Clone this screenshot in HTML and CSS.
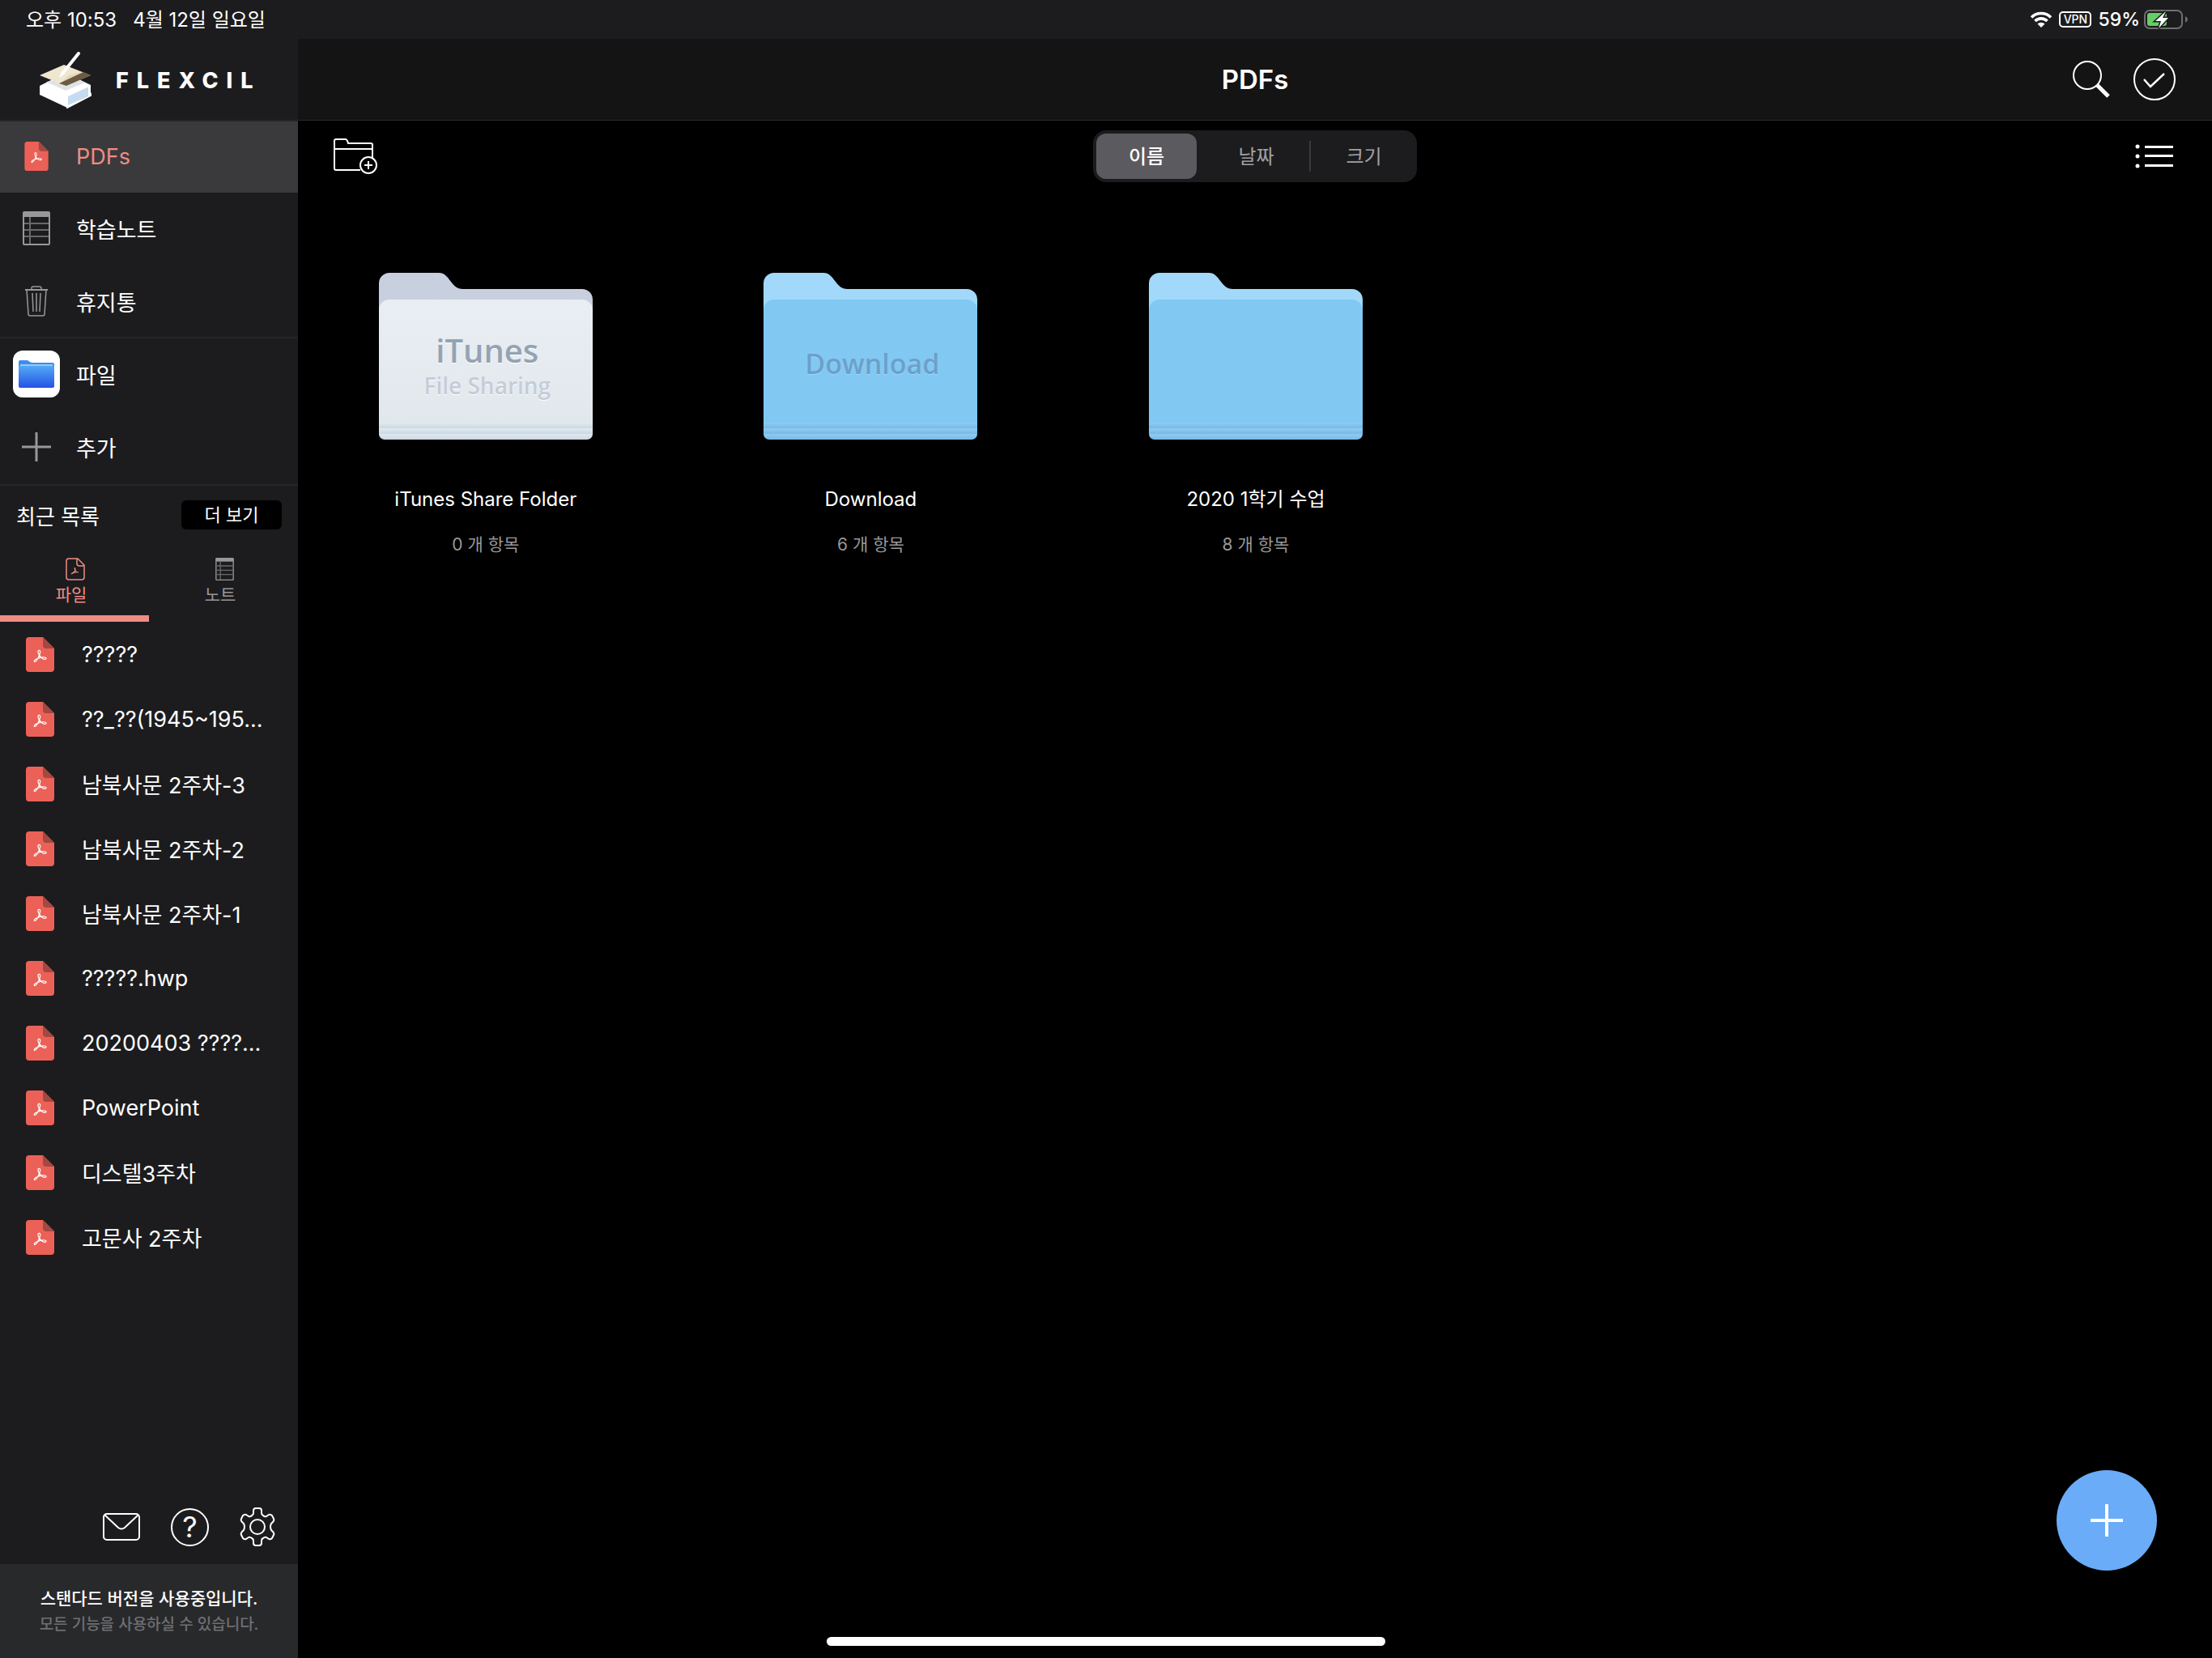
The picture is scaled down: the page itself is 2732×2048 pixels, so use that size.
FILE: index.html
```html
<!DOCTYPE html>
<html lang="ko">
<head>
    <meta charset="UTF-8">
    <meta name="viewport" content="width=device-width, initial-scale=1.0">
    <title>Flexcil - PDFs</title>
    <link rel="stylesheet" href="styles.css">
</head>
<body>
    <!-- Shared shapes -->
    <svg class="defs" width="0" height="0" aria-hidden="true">
        <symbol id="pdf" viewBox="0 0 35 43">
            <path d="M4 0H21L35 14V39a4 4 0 0 1-4 4H4a4 4 0 0 1-4-4V4a4 4 0 0 1 4-4z" fill="#ec6157"/>
            <path d="M21 0L35 14H25a4 4 0 0 1-4-4z" fill="#a34842"/>
            <path d="M16.800 25C17 22 14.500 20 15 17.500C15.500 15.500 18 16 17.700 18.500C17.500 21 15.500 25 13.500 28.500C12 31 9.500 31 10.500 29C12 26.500 17 25.500 21 24.800C24 24.500 26 26 24.500 27C22.500 28 18.500 26 17 22.500" fill="none" stroke="#fff" stroke-width="1.200" stroke-linejoin="round"/>
        </symbol>
        <symbol id="note" viewBox="0 0 34 42">
            <rect x="1" y="1" width="32" height="40" rx="1" fill="none" stroke="#98989a" stroke-width="2"/>
            <path d="M1 1h32v6H1z" fill="#98989a"/>
            <path d="M2 15h30M2 23h30M2 31h30M9 7v33" stroke="#68686a" stroke-width="2"/>
        </symbol>
        <linearGradient id="stripe" x1="0" y1="0" x2="0" y2="1">
            <stop offset="0" stop-color="#8fccf4"/>
            <stop offset="1" stop-color="#78b8e4"/>
        </linearGradient>
        <linearGradient id="paper" x1="0" y1="0" x2="0" y2="1">
            <stop offset="0" stop-color="#e9eef3"/>
            <stop offset="1" stop-color="#e1e8ec"/>
        </linearGradient>
        <linearGradient id="paperStripe" x1="0" y1="0" x2="0" y2="1">
            <stop offset="0" stop-color="#e1eaf0"/>
            <stop offset="1" stop-color="#cbd7e2"/>
        </linearGradient>
        <linearGradient id="fileBlue" x1="0" y1="0" x2="0" y2="1">
            <stop offset="0" stop-color="#52aaf5"/>
            <stop offset="1" stop-color="#2451e6"/>
        </linearGradient>
        <symbol id="folder" viewBox="0 0 264 206">
            <path d="M0 13A13 13 0 0 1 13 0H74C88 0 88 20 104 20H251a13 13 0 0 1 13 13V100H0z" fill="#a2d9fa"/>
            <path d="M0 46a13 13 0 0 1 13-13H251a13 13 0 0 1 13 13V190H0z" fill="#81c8f3"/>
            <path d="M0 185h264v7H0zM0 192h264v7H0z" fill="#8fccf4"/>
            <path d="M0 199h264a7 7 0 0 1-7 7H7a7 7 0 0 1-7-7z" fill="url(#stripe)"/>
            <rect y="185" width="264" height="7" fill="url(#stripe)"/>
            <rect y="192" width="264" height="7" fill="url(#stripe)"/>
        </symbol>
        <symbol id="folder-light" viewBox="0 0 264 206">
            <path d="M0 13A13 13 0 0 1 13 0H74C88 0 88 20 104 20H251a13 13 0 0 1 13 13V100H0z" fill="#c8cfde"/>
            <path d="M0 46a13 13 0 0 1 13-13H251a13 13 0 0 1 13 13V190H0z" fill="url(#paper)"/>
            <path d="M0 199h264a7 7 0 0 1-7 7H7a7 7 0 0 1-7-7z" fill="url(#paperStripe)"/>
            <rect y="185" width="264" height="7" fill="url(#paperStripe)"/>
            <rect y="192" width="264" height="7" fill="url(#paperStripe)"/>
        </symbol>
    </svg>

    <!-- Status Bar -->
    <div class="status-bar">
        <div class="status-left">
            <span>오후 10:53</span>
            <span>4월 12일 일요일</span>
        </div>
        <div class="status-right">
            <svg width="28" height="20" viewBox="0 0 28 20">
                <path d="M2 7.500a17 17 0 0 1 24 0M6.500 12a10.500 10.500 0 0 1 15 0" fill="none" stroke="#fff" stroke-width="3.600"/>
                <path d="M9.500 15.500a6.500 6.500 0 0 1 9 0L14 20z" fill="#fff"/>
            </svg>
            <span class="vpn">VPN</span>
            <span class="percent">59%</span>
            <svg width="54" height="24" viewBox="0 0 54 24">
                <rect x="1" y="1" width="46" height="22" rx="6" fill="none" stroke="#6f6f72" stroke-width="2"/>
                <path d="M51 8q3 1.500 3 4t-3 4z" fill="#6f6f72"/>
                <rect x="4" y="4" width="24" height="16" rx="3" fill="#65ce66"/>
                <path d="M27 2L14 14h7l-3 9L30 10h-7z" fill="#fff" stroke="#1c1c1e" stroke-width="3" paint-order="stroke"/>
            </svg>
        </div>
    </div>

    <div class="app">
        <!-- Sidebar -->
        <aside class="sidebar">
            <div class="brand">
                <svg width="64" height="70" viewBox="0 0 64 70">
                    <path d="M0 42L32 26 63 41v11L34 69 0 53z" fill="#fff"/>
                    <path d="M8 37L32 48 56 38 40 32z" fill="#e0e2e3"/>
                    <path d="M35 55L61 43v11L35 66z" fill="#c4dcf2"/>
                    <path d="M61 43v10l2-1v2L34 69v-3" fill="none" stroke="#fff" stroke-width="2"/>
                    <path d="M0 29L30 16 63 29 32 42z" fill="#efe6cf"/>
                    <path d="M36 29L52 25 56 27 24 40z" fill="#e5d7b5"/>
                    <path d="M54 25L63 29 33 42 24 39z" fill="#6b5b45"/>
                    <path d="M48 2L28 27" stroke="#fff" stroke-width="4" stroke-linecap="round"/>
                    <path d="M27 24l4 3-7 5z" fill="#fff"/>
                </svg>
                <span class="brand-name">FLEXCIL</span>
            </div>

            <nav class="menu">
                <a href="#" class="active"><span class="icon"><svg width="30" height="36"><use href="#pdf"/></svg></span>PDFs</a>
                <a href="#"><span class="icon"><svg width="34" height="42"><use href="#note"/></svg></span>학습노트</a>
                <a href="#" class="divided"><span class="icon">
                    <svg width="28" height="38" viewBox="0 0 28 38" fill="none" stroke="#98989a">
                        <path d="M0 5h28" stroke-width="2"/>
                        <path d="M8 5V3q0-2 2-2h8q2 0 2 2v2M2 5l2 30q0 2 2 2h16q2 0 2-2l2-30M9 9l1 23M14 9v23M19 9l-1 23" stroke-width="1.500"/>
                    </svg></span>휴지통</a>
                <a href="#"><span class="icon">
                    <svg width="58" height="58" viewBox="0 0 58 58">
                        <rect width="58" height="58" rx="12" fill="#fff"/>
                        <path d="M7 14q0-2 2-2h8q2 0 4 2 1 1 3 1h25q2 0 2 2v8H7z" fill="#3a8ff0"/>
                        <path d="M9 18h40" stroke="#fff"/>
                        <path d="M7 19h44v25q0 2-2 2H9q-2 0-2-2z" fill="url(#fileBlue)"/>
                    </svg></span>파일</a>
                <a href="#"><span class="icon">
                    <svg width="36" height="36" viewBox="0 0 36 36"><path d="M18 0v36M0 18h36" stroke="#98989a" stroke-width="3"/></svg></span>추가</a>
            </nav>

            <div class="recent-head">
                <h2>최근 목록</h2>
                <button class="more">더 보기</button>
            </div>
            <div class="tabs">
                <button class="tab selected">
                    <svg width="24" height="28" viewBox="0 0 24 28" fill="none" stroke="#f08c84">
                        <path d="M4 1H15l8 8V24q0 3-3 3H4q-3 0-3-3V4q0-3 3-3zM14 1v6q0 3 3 3h6" stroke-width="1.500"/>
                        <path d="M11 12q2 3 0 5l-4 3q5-3 9-2-4 0-5-5" stroke-width="1.200"/>
                    </svg>
                    파일
                </button>
                <button class="tab">
                    <svg width="23" height="28"><use href="#note"/></svg>
                    노트
                </button>
            </div>
            <ul class="recent">
                <li><a href="#"><svg width="35" height="43"><use href="#pdf"/></svg>?????</a></li>
                <li><a href="#"><svg width="35" height="43"><use href="#pdf"/></svg>??_??(1945~195...</a></li>
                <li><a href="#"><svg width="35" height="43"><use href="#pdf"/></svg>남북사문 2주차-3</a></li>
                <li><a href="#"><svg width="35" height="43"><use href="#pdf"/></svg>남북사문 2주차-2</a></li>
                <li><a href="#"><svg width="35" height="43"><use href="#pdf"/></svg>남북사문 2주차-1</a></li>
                <li><a href="#"><svg width="35" height="43"><use href="#pdf"/></svg>?????.hwp</a></li>
                <li><a href="#"><svg width="35" height="43"><use href="#pdf"/></svg>20200403 ????...</a></li>
                <li><a href="#"><svg width="35" height="43"><use href="#pdf"/></svg>PowerPoint</a></li>
                <li><a href="#"><svg width="35" height="43"><use href="#pdf"/></svg>디스텔3주차</a></li>
                <li><a href="#"><svg width="35" height="43"><use href="#pdf"/></svg>고문사 2주차</a></li>
            </ul>

            <div class="tools">
                <button aria-label="메일">
                    <svg width="46" height="34" viewBox="0 0 46 34" fill="none" stroke="#fff" stroke-width="2">
                        <rect x="1" y="1" width="44" height="32" rx="4"/>
                        <path d="M2 2l17 16q4 3 8 0L44 2"/>
                    </svg>
                </button>
                <button aria-label="도움말" class="help">?</button>
                <button aria-label="설정">
                    <svg width="44" height="48" viewBox="0 0 44 48" fill="none" stroke="#fff" stroke-width="2" stroke-linejoin="round">
                        <path d="M17 4q0-3 3-3h4q3 0 3 3v3q0 2 2 3 2 2 4 1l3-2q2-1 4 1l2 4q1 2-1 4l-2 2q-1 2-1 4t1 4l2 2q2 2 1 4l-2 4q-2 2-4 1l-3-2q-2-1-4 1-2 1-2 3v3q0 3-3 3h-4q-3 0-3-3v-3q0-2-2-3-2-2-4-1l-3 2q-2 1-4-1l-2-4q-1-2 1-4l2-2q1-2 1-4t-1-4l-2-2q-2-2-1-4l2-4q2-2 4-1l3 2q2 1 4-1 2-1 2-3z"/>
                        <circle cx="22" cy="24" r="9"/>
                    </svg>
                </button>
            </div>
            <div class="plan">
                <p>스탠다드 버전을 사용중입니다.</p>
                <small>모든 기능을 사용하실 수 있습니다.</small>
            </div>
        </aside>

        <!-- Documents -->
        <main>
            <header>
                <h1>PDFs</h1>
                <div class="header-buttons">
                    <button aria-label="검색">
                        <svg width="46" height="46" viewBox="0 0 46 46" fill="none" stroke="#fff">
                            <circle cx="18" cy="18" r="17" stroke-width="2"/>
                            <path d="M30 30l14 14" stroke-width="5"/>
                        </svg>
                    </button>
                    <button aria-label="선택">
                        <svg width="54" height="54" viewBox="0 0 54 54" fill="none" stroke="#fff" stroke-width="2">
                            <circle cx="27" cy="27" r="25"/>
                            <path d="M14 27l8 9 17-16" stroke-width="2.500"/>
                        </svg>
                    </button>
                </div>
            </header>

            <div class="toolbar">
                <button aria-label="새 폴더">
                    <svg width="54" height="44" viewBox="0 0 54 44" fill="none" stroke="#fff" stroke-width="2">
                        <path d="M33 39H3q-2 0-2-2V3q0-2 2-2h12q1 0 2 2l1 3h28q2 0 2 2v16M1 13h47"/>
                        <circle cx="43" cy="33" r="10"/>
                        <path d="M43 28v10M38 33h10"/>
                    </svg>
                </button>
                <div class="sort">
                    <button class="selected">이름</button>
                    <button>날짜</button>
                    <button>크기</button>
                </div>
                <button aria-label="목록 보기" class="list-view">
                    <svg width="47" height="30" viewBox="0 0 47 30" fill="#fff">
                        <circle cx="3" cy="3" r="2.500"/><circle cx="3" cy="15" r="2.500"/><circle cx="3" cy="27" r="2.500"/>
                        <path d="M12 2h35v3H12zM12 13h35v3H12zM12 25h35v3H12z"/>
                    </svg>
                </button>
            </div>

            <div class="folders">
                <a href="#" class="folder">
                    <span class="art">
                        <svg width="264" height="206"><use href="#folder-light"/></svg>
                        <span class="emboss itunes">iTunes<small>File Sharing</small></span>
                    </span>
                    <span class="name">iTunes Share Folder</span>
                    <span class="count">0 개 항목</span>
                </a>
                <a href="#" class="folder">
                    <span class="art">
                        <svg width="264" height="206"><use href="#folder"/></svg>
                        <span class="emboss">Download</span>
                    </span>
                    <span class="name">Download</span>
                    <span class="count">6 개 항목</span>
                </a>
                <a href="#" class="folder">
                    <span class="art">
                        <svg width="264" height="206"><use href="#folder"/></svg>
                    </span>
                    <span class="name">2020 1학기 수업</span>
                    <span class="count">8 개 항목</span>
                </a>
            </div>
        </main>
    </div>

    <button class="add" aria-label="추가">
        <svg width="40" height="40" viewBox="0 0 40 40"><path d="M20 0v40M0 20h40" stroke="#fff" stroke-width="4"/></svg>
    </button>
    <div class="home-indicator"></div>
</body>
</html>
```
FILE: styles.css
```css
/* Global Styles */
* {
    box-sizing: border-box;
}
body {
    font-family: Inter, "Noto Sans CJK KR", sans-serif;
    font-size: 27px;
    margin: 0;
    min-height: 100vh;
    display: flex;
    flex-direction: column;
    background: #000;
    color: #fff;
}
h1, h2, p, ul {
    margin: 0;
    padding: 0;
}
a {
    color: inherit;
    text-decoration: none;
}
button {
    font: inherit;
    color: inherit;
    background: none;
    border: none;
    padding: 0;
    cursor: pointer;
}
svg {
    display: block;
    flex: none;
}
.defs {
    position: absolute;
}
/* Status Bar */
.status-bar {
    display: flex;
    align-items: center;
    justify-content: space-between;
    height: 48px;
    padding: 0 30px 0 32px;
    background: #1c1c1e;
    font-size: 23px;
    font-weight: 500;
}
.status-left {
    display: flex;
    gap: 20px;
    padding-bottom: 4px;
    font-size: 24px;
    font-weight: 400;
}
.status-right {
    display: flex;
    align-items: center;
}
.vpn {
    margin: 0 8px;
    width: 40px;
    line-height: 16px;
    text-align: center;
    font-size: 14px;
    border: 2px solid #fff;
    border-radius: 5px;
}
.percent {
    margin-right: 5px;
}
/* Sidebar */
.app {
    flex: 1;
    display: flex;
}
.sidebar {
    width: 368px;
    flex: none;
    display: flex;
    flex-direction: column;
    background: #1c1c1e;
}
.brand {
    display: flex;
    align-items: center;
    gap: 30px;
    height: 102px;
    padding: 2px 0 0 49px;
    border-bottom: 2px solid #262628;
}
.brand-name {
    font-weight: 800;
    letter-spacing: 10px;
}
.menu {
    border-bottom: 2px solid #262628;
}
.menu a {
    display: flex;
    align-items: center;
    height: 90px;
    padding-bottom: 2px;
}
.menu .active {
    height: 88px;
    background: #3a3a3c;
    color: #f08c84;
}
.menu .divided {
    border-bottom: 2px solid #262628;
    padding-bottom: 0;
}
.icon {
    width: 90px;
    margin-right: 4px;
    display: flex;
    justify-content: center;
}
.recent-head {
    display: flex;
    align-items: center;
    justify-content: space-between;
    height: 72px;
    padding: 0 20px;
}
.recent-head h2 {
    font-size: 26px;
    font-weight: 400;
}
.more {
    width: 124px;
    height: 36px;
    background: #000;
    border-radius: 6px;
    font-size: 22px;
    line-height: 36px;
}
.tabs {
    display: flex;
    height: 96px;
}
.tab {
    flex: 1;
    display: flex;
    flex-direction: column;
    align-items: center;
    padding: 17px 8px 0 0;
    border-bottom: 8px solid transparent;
    color: #98989a;
    font-size: 21px;
    line-height: 36px;
}
.tab svg {
    margin-left: 10px;
}
.tab.selected {
    color: #f08c84;
    border-color: #f08c84;
}
.recent {
    list-style: none;
}
.recent a {
    display: flex;
    align-items: center;
    gap: 34px;
    height: 80px;
    padding-left: 32px;
    white-space: nowrap;
}
.tools {
    display: flex;
    align-items: center;
    justify-content: flex-end;
    gap: 38px;
    height: 92px;
    margin-top: auto;
    padding-right: 28px;
}
.help {
    width: 47px;
    height: 47px;
    border: 2px solid #fff;
    border-radius: 50%;
    font-size: 36px;
    line-height: 43px;
}
.plan {
    height: 116px;
    padding-top: 27px;
    background: #28292b;
    text-align: center;
    font-size: 21px;
    font-weight: 500;
    line-height: 32px;
}
.plan small {
    display: block;
    color: #6f6f72;
    font-size: 19px;
}
/* Main */
main {
    flex: 1;
}
header {
    display: grid;
    grid-template-columns: 1fr auto 1fr;
    align-items: center;
    height: 101px;
    padding: 0 44px;
    background: #141414;
    border-bottom: 1px solid #2a2a2a;
}
h1 {
    grid-column: 2;
    font-size: 33px;
    font-weight: 600;
}
.header-buttons {
    display: flex;
    align-items: center;
    justify-content: flex-end;
    gap: 28px;
}
.toolbar {
    display: grid;
    grid-template-columns: 1fr auto 1fr;
    align-items: center;
    height: 88px;
    padding: 0 44px;
}
.toolbar > button {
    justify-self: start;
}
.toolbar .list-view {
    justify-self: end;
    margin-right: 4px;
}
.sort {
    display: flex;
    width: 400px;
    height: 64px;
    padding: 4px 0 4px 4px;
    background: #1c1c1e;
    border-radius: 16px;
}
.sort button {
    flex: 1;
    padding-bottom: 3px;
    color: #a0a0a2;
    font-size: 24px;
}
.sort .selected {
    flex: none;
    width: 124px;
    margin-right: 8px;
    background: #5b5a5f;
    color: #fff;
    border-radius: 12px;
    font-weight: 500;
}
.sort button:last-child {
    border-left: 2px solid #3a3a3c;
    border-image: linear-gradient(transparent 18%, #3a3a3c 18% 82%, transparent 82%) 1;
}
/* Folders */
.folders {
    display: grid;
    grid-template-columns: repeat(5, 1fr);
    gap: 80px;
    padding: 100px 32px 0 34px;
}
.folder {
    display: flex;
    flex-direction: column;
    align-items: center;
}
.art {
    position: relative;
}
.emboss {
    position: absolute;
    inset: 89px 0 0 4px;
    text-align: center;
    font-family: "Open Sans", sans-serif;
    font-size: 34px;
    font-weight: 600;
    line-height: 46px;
    color: #6ca0c9;
    text-shadow: 0 1px 1px #9dd8fa;
}
.itunes {
    top: 73px;
    font-size: 40px;
    color: #94a3b3;
    text-shadow: 0 1px 1px #fff;
}
.itunes small {
    display: block;
    font-size: 28px;
    line-height: 40px;
    color: #c4ccd7;
}
.name {
    margin-top: 58px;
    font-size: 24px;
    line-height: 32px;
}
.count {
    margin-top: 24px;
    font-size: 21px;
    line-height: 32px;
    color: #98989a;
}
/* Floating Controls */
.add {
    position: fixed;
    right: 68px;
    bottom: 108px;
    width: 124px;
    height: 124px;
    display: flex;
    align-items: center;
    justify-content: center;
    background: #6aacf7;
    border-radius: 50%;
}
.home-indicator {
    position: fixed;
    left: 50%;
    bottom: 15px;
    width: 690px;
    height: 11px;
    margin-left: -345px;
    background: #fff;
    border-radius: 6px;
}
```
